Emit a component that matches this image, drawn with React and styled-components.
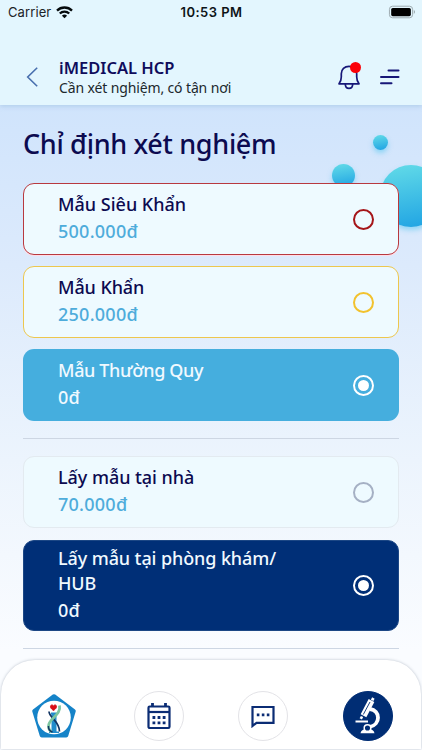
import React from 'react'
import styled, { createGlobalStyle } from 'styled-components'

const GlobalStyle = createGlobalStyle`
* {
    box-sizing: border-box;
}
body {
    margin: 0;
    font-family: "Noto Sans", sans-serif;
}
`
const Screen = styled.div`
position: relative;
width: 422px;
height: 750px;
overflow: hidden;
display: flex;
flex-direction: column;
background: linear-gradient(180deg, #d0e4fc 105px, #dceafc 265px, #ecf4fd 460px, #fafcff 650px);
`
const Header = styled.header`
height: 105px;
flex: none;
z-index: 1;
background-color: #e3f6fe;
box-shadow: 0 1px 5px rgba(120, 165, 205, 0.4);
`
const StatusBar = styled.div`
display: grid;
grid-template-columns: 1fr auto 1fr;
align-items: center;
height: 24px;
padding: 0 7px 0 8px;
font-family: Inter, sans-serif;
font-size: 13px;
color: #1b2226;
`
const Carrier = styled.div`
display: flex;
align-items: center;
gap: 5px;
letter-spacing: 0.1px;
`
const Clock = styled.div`
font-weight: 600;
color: #0d1417;
letter-spacing: 0.45px;
`
const Battery = styled.div`
display: flex;
justify-content: flex-end;
`
const TopBar = styled.div`
display: flex;
align-items: center;
height: 81px;
padding: 25px 22px 0 26px;
`
const Brand = styled.div`
flex: 1;
margin-left: 21px;
`
const BrandName = styled.h1`
margin: 0;
font-size: 16.5px;
font-weight: 600;
line-height: 21px;
color: #0f0c5c;
`
const Slogan = styled.p`
margin: 0;
font-size: 14px;
line-height: 20px;
color: #20282c;
letter-spacing: -0.13px;
`
const Actions = styled.div`
display: flex;
align-items: center;
gap: 20px;
`
const BellWrap = styled.div`
position: relative;
display: flex;
`
const Dot = styled.span`
position: absolute;
top: -3px;
right: -1px;
width: 11.5px;
height: 11.5px;
border-radius: 50%;
background-color: #fb0007;
`
const Content = styled.main`
flex: 1;
position: relative;
padding: 0 23px;
`
const Bubble = styled.span`
position: absolute;
left: ${({ x }) => x}px;
top: ${({ y }) => y}px;
width: ${({ size }) => size}px;
height: ${({ size }) => size}px;
border-radius: 50%;
background: linear-gradient(170deg, #63dce8, #1ea2e3);
box-shadow: 0 3px 5px rgba(70, 195, 240, 0.5);
`
const Title = styled.h2`
position: relative;
margin: 19px 0;
font-size: 27px;
font-weight: 500;
line-height: 40px;
letter-spacing: -0.32px;
color: #0c0a50;
white-space: nowrap;
`
const Options = styled.div`
position: relative;
display: flex;
flex-direction: column;
gap: ${({ gap }) => gap}px;
`
const Option = styled.div`
display: flex;
align-items: center;
height: ${({ tall }) => (tall ? 91 : 72)}px;
padding: 0 24.5px 0 34px;
border: ${({ border }) => (border ? `1.5px solid ${border}` : "1px solid transparent")};
border-radius: 11px;
background-color: ${({ bg }) => bg};
box-shadow: ${({ glow }) => (glow ? `0 1px 0 ${glow}` : "none")};
color: ${({ color }) => color};
`
const OptionText = styled.div`
flex: 1;
margin-top: -1px;
`
const OptionName = styled.div`
width: 240px;
font-size: 18px;
font-weight: 500;
line-height: 25px;
letter-spacing: ${({ spacing }) => spacing || 0}px;
`
const Price = styled.div`
padding-top: 1px;
font-size: 18px;
font-weight: 500;
line-height: 27px;
letter-spacing: 0.25px;
color: ${({ color }) => color};
`
const Radio = styled.span`
display: flex;
align-items: center;
justify-content: center;
width: 21px;
height: 21px;
border: 2px solid ${({ color }) => color};
border-radius: 50%;
&::after {
    content: "";
    width: 11px;
    height: 11px;
    border-radius: 50%;
    background-color: ${({ checked }) => (checked ? "#fff" : "transparent")};
}
`
const Divider = styled.hr`
position: relative;
height: 1px;
margin: 17px 0;
border: none;
background-color: #cdd6e3;
`
const TabBar = styled.nav`
position: absolute;
left: 1px;
right: 1px;
bottom: 1px;
height: 89px;
display: flex;
justify-content: space-between;
padding: 31px 28px 0;
border-radius: 34px 34px 0 0;
background-color: #fff;
box-shadow: 0 0 3px rgba(90, 105, 125, 0.4);
`
const Tab = styled.div`
display: flex;
align-items: center;
justify-content: center;
width: 50px;
height: 50px;
border-radius: 50%;
border: 1px solid ${({ plain, active }) => (plain ? "transparent" : active ? "#002d74" : "#e3e3e7")};
background-color: ${({ active }) => (active ? "#002d74" : "#fff")};
`

const NAVY = "#0c0a50"
const BLUE = "#4eacdb"

const urgency = [
    { name: "Mẫu Siêu Khẩn", price: "500.000đ", bg: "#eefaff", border: "#b8393f", radio: "#a51519", glow: "#ffdce6" },
    { name: "Mẫu Khẩn", price: "250.000đ", bg: "#eefaff", border: "#edc74e", radio: "#f2c22e", spacing: -0.1 },
    { name: "Mẫu Thường Quy", price: "0đ", bg: "#45aede", checked: true, spacing: -0.36 },
]
const places = [
    { name: "Lấy mẫu tại nhà", price: "70.000đ", bg: "#eefaff", border: "#e3eaf0", radio: "#a5b0c4", spacing: -0.05 },
    { name: "Lấy mẫu tại phòng khám/ HUB", price: "0đ", bg: "#002f77", border: "#1c4785", checked: true, tall: true, spacing: -0.1 },
]

function WifiIcon() {
    return (
        <svg width="17" height="13" viewBox="0 0 17 13" fill="none" stroke="#050a0c" strokeWidth="2.3">
            <path d="M1 4.6a10.6 10.6 0 0 1 15 0" />
            <path d="M3.8 7.5a6.6 6.6 0 0 1 9.4 0" />
            <path d="M8.5 12.3 5.9 9.7a3.7 3.7 0 0 1 5.2 0z" fill="#050a0c" stroke="none" />
        </svg>
    )
}

function BatteryIcon() {
    return (
        <svg width="27" height="14" viewBox="0 0 28 14">
            <rect x="1.5" y="1" width="24" height="12" rx="3.2" fill="none" stroke="#9ba9ae" />
            <rect x="3.3" y="2.8" width="20.4" height="8.5" rx="1.6" fill="#000" />
            <path d="M26.8 5v4q1.2-.7 1.2-2t-1.2-2z" fill="#9ba9ae" />
        </svg>
    )
}

function BackIcon() {
    return (
        <svg width="12" height="20" viewBox="0 0 12 20" fill="none" stroke="#486fae" strokeWidth="1.6">
            <path d="M11.2.8 1.7 10l9.5 9.2" />
        </svg>
    )
}

function BellIcon() {
    return (
        <svg width="22" height="25" viewBox="0 0 22 25" fill="none" stroke="#171778" strokeWidth="1.7" strokeLinejoin="round">
            <path d="M1 18.8c1.6-1.9 2.3-3.5 2.3-6.7V8.7c0-4.3 3.2-7.4 7.7-7.4s7.7 3.1 7.7 7.4v3.4c0 3.2.7 4.8 2.3 6.7z" />
            <path d="M7.3 19c0 2.9 1.5 4.4 3.7 4.4s3.7-1.5 3.7-4.4" />
        </svg>
    )
}

function MenuIcon() {
    return (
        <svg width="20" height="16" viewBox="0 0 20 16" stroke="#171778" strokeWidth="2" strokeLinecap="round">
            <path d="M8.5 1.6h10M1 8h17.5M1 14.3h10.5" />
        </svg>
    )
}

function LogoIcon() {
    return (
        <svg width="46" height="46" viewBox="0 0 46 46">
            <path d="M23 3.2 42.8 18 35.3 42.5H10.7L3.2 18z" fill="#1583c8" stroke="#1583c8" strokeWidth="4" strokeLinejoin="round" />
            <circle cx="23" cy="24.5" r="16.8" fill="#fff" />
            <path d="M20 19.5h5.5v19H28V40H18v-1.5h2.5v-17H20z" fill="#208ccb" />
            <path d="M18 18.5c0 6 10.5 9.5 10.5 20" fill="none" stroke="#123563" strokeWidth="1.7" />
            <path d="M28.5 12.5c2 10-11.5 13-11 21 .2 3 1.5 4.5 3 5.5" fill="none" stroke="#7cc5a0" strokeWidth="2.8" />
            <path d="M17.5 33c-.3 3 1 5 4 6" fill="none" stroke="#123563" strokeWidth="1.5" />
            <path d="M22.5 17.5c-4-2.5-3.5-5.5-1.5-5.5.8 0 1.5.8 1.5 1.3 0-.5.7-1.3 1.5-1.3 2 0 2.5 3-1.5 5.5z" fill="#d90d16" stroke="#d90d16" />
        </svg>
    )
}

function CalendarIcon() {
    return (
        <svg width="24" height="28" viewBox="0 0 24 28" fill="none" stroke="#0b2c74" strokeWidth="2.2">
            <path d="M5.5 1v4M18.5 1v4" strokeWidth="2.8" />
            <rect x="1.5" y="4.5" width="21" height="21.5" rx="1.2" />
            <path d="M1 10h22" />
            <path d="M5.5 15.5h13M5.5 20.8h13" strokeWidth="2.8" strokeDasharray="2.8 2.3" />
        </svg>
    )
}

function ChatIcon() {
    return (
        <svg width="24" height="24" viewBox="0 0 24 24" fill="none" stroke="#0b2c74" strokeWidth="2.2">
            <path d="M1.5 3h21v15.8H5.5L1.5 22z" />
            <path d="M5.8 10.9h13" strokeWidth="2.6" strokeDasharray="2.6 2.4" />
        </svg>
    )
}

function MicroscopeIcon() {
    return (
        <svg width="28" height="38" viewBox="0 0 28 38" fill="none" stroke="#fff">
            <path d="M17.5 3.5 9.5 18.8" strokeWidth="6.4" />
            <path d="M16 5 9.3 17.5" stroke="#002d74" strokeWidth="0.9" />
            <path d="M17.5 1.5 20 2.8" strokeWidth="2.6" />
            <path d="M8 19.5 6.8 21.8" strokeWidth="2.6" />
            <path d="M16 12c10.500 1.500 11 15.500-.5 18" strokeWidth="3.8" />
            <path d="M1.500 24.500H14" strokeWidth="2" />
            <path d="M6.500 36.300c.5-3 3-4.500 7-4.500s6.500 1.500 7 4.500z" fill="#fff" stroke="none" />
            <circle cx="13.5" cy="31" r="3.3" fill="#002d74" strokeWidth="1.5" />
        </svg>
    )
}

function OptionCard({ item }) {
    const { name, price, bg, border, radio, glow, checked, tall, spacing } = item
    return (
        <Option bg={bg} border={border} glow={glow} tall={tall} color={checked ? "#f0f9ff" : NAVY}>
            <OptionText>
                <OptionName spacing={spacing}>{name}</OptionName>
                <Price color={checked ? "#f0f9ff" : BLUE}>{price}</Price>
            </OptionText>
            <Radio color={checked ? "#fff" : radio} checked={checked} />
        </Option>
    )
}

function App() {
    return (
        <Screen>
            <GlobalStyle />
            <Header>
                <StatusBar>
                    <Carrier>Carrier <WifiIcon /></Carrier>
                    <Clock>10:53 PM</Clock>
                    <Battery><BatteryIcon /></Battery>
                </StatusBar>
                <TopBar>
                    <BackIcon />
                    <Brand>
                        <BrandName>iMEDICAL HCP</BrandName>
                        <Slogan>Cần xét nghiệm, có tận nơi</Slogan>
                    </Brand>
                    <Actions>
                        <BellWrap>
                            <BellIcon />
                            <Dot />
                        </BellWrap>
                        <MenuIcon />
                    </Actions>
                </TopBar>
            </Header>
            <Content>
                <Bubble x={372.5} y={30} size={15} />
                <Bubble x={332} y={59} size={23} />
                <Bubble x={379.5} y={60} size={62} />
                <Title>Chỉ định xét nghiệm</Title>
                <Options gap={11}>
                    {urgency.map((item) => <OptionCard key={item.name} item={item} />)}
                </Options>
                <Divider />
                <Options gap={12}>
                    {places.map((item) => <OptionCard key={item.name} item={item} />)}
                </Options>
                <Divider />
            </Content>
            <TabBar>
                <Tab plain><LogoIcon /></Tab>
                <Tab><CalendarIcon /></Tab>
                <Tab><ChatIcon /></Tab>
                <Tab active><MicroscopeIcon /></Tab>
            </TabBar>
        </Screen>
    )
}

export default App
